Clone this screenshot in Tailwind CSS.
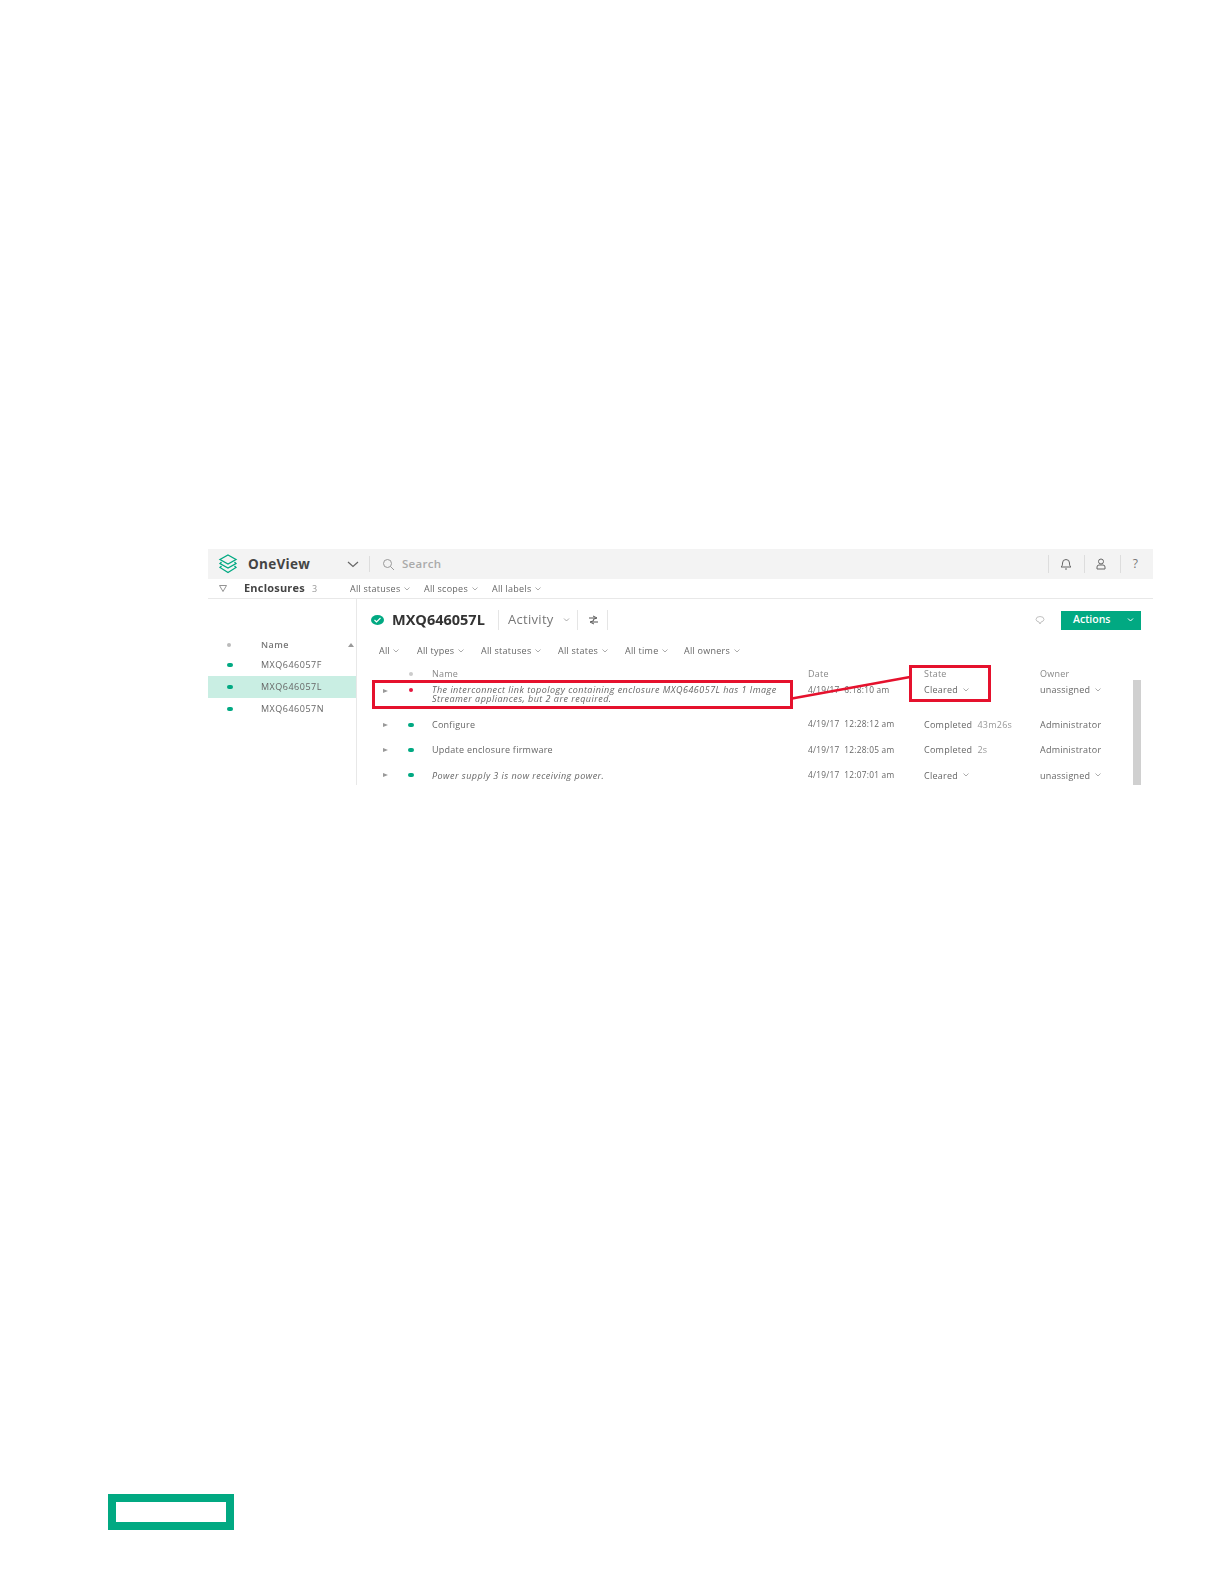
<!DOCTYPE html>
<html lang="en">
<head>
    <meta charset="UTF-8">
    <title>OneView Enclosures</title>
    <script src="https://cdn.jsdelivr.net/npm/@tailwindcss/browser@4"></script>
</head>
<body class="bg-white min-h-screen font-['Open_Sans',sans-serif]">
    <div class="relative w-[1224px] h-[1584px] pt-[549px] pl-[208px]">

        <!-- Screenshot of the app -->
        <div class="w-[945px] h-[236px] text-[#666] blur-[0.4px]">
            <!-- Top bar -->
            <div class="h-[30px] bg-[#f3f3f3] flex items-center">
                <svg class="ml-[10px] w-[20px] h-[20px]" viewBox="0 0 20 20" fill="none" stroke="#01a982" stroke-width="1.3">
                    <path d="M10 1 L18 5.5 L10 10 L2 5.5 Z"/>
                    <path d="M3.5 8 L2 9.5 L10 14 L18 9.5 L16.5 8"/>
                    <path d="M3.5 12 L2 13.5 L10 18.5 L18 13.5 L16.5 12"/>
                </svg>
                <span class="ml-[10px] w-[99px] text-[13.5px] font-bold text-[#444] tracking-[0.3px]">OneView</span>
                <svg class="w-[12px] h-[7px]" viewBox="0 0 12 7" fill="none" stroke="#666" stroke-width="1.2"><path d="M1 1 L6 5.5 L11 1"/></svg>
                <div class="ml-[10px] w-px h-[16px] bg-[#ddd]"></div>
                <svg class="ml-[12px] w-[13px] h-[13px]" viewBox="0 0 13 13" fill="none" stroke="#999" stroke-width="1"><circle cx="5.5" cy="5.5" r="4"/><path d="M8.5 8.5 L12 12"/></svg>
                <span class="ml-[7px] text-[11.5px] font-semibold text-[#aaa] tracking-[0.3px]">Search</span>
                <div class="ml-auto w-px h-[18px] bg-[#ddd]"></div>
                <svg class="ml-[11px] w-[12px] h-[12px]" viewBox="0 0 12 12" fill="none" stroke="#666" stroke-width="1"><path d="M1 9 C2.5 8 2.5 6.5 2.5 5 A3.5 3.5 0 0 1 9.5 5 C9.5 6.5 9.5 8 11 9 Z"/><path d="M5 11 H7"/></svg>
                <div class="ml-[12px] w-px h-[18px] bg-[#ddd]"></div>
                <svg class="ml-[10px] w-[12px] h-[12px]" viewBox="0 0 12 12" fill="none" stroke="#666" stroke-width="1"><circle cx="6" cy="3.5" r="2.5"/><path d="M2 11 V9 A2 2 0 0 1 4 7 H8 A2 2 0 0 1 10 9 V11 Z"/></svg>
                <div class="ml-[13px] w-px h-[18px] bg-[#ddd]"></div>
                <span class="ml-[12px] text-[12px] text-[#777]">?</span>
                <div class="w-[15px]"></div>
            </div>

            <!-- Filter bar -->
            <div class="h-[20px] border-b border-[#e8e8e8] flex items-center text-[9px] tracking-[0.25px] text-[#666]">
                <svg class="ml-[11px] w-[8px] h-[7px]" viewBox="0 0 8 7" fill="none" stroke="#888" stroke-width="0.9"><path d="M0.5 0.5 H7.5 L4 6.5 Z"/></svg>
                <span class="ml-[17px] text-[11px] font-bold text-[#444] tracking-[0.2px] w-[68px]">Enclosures</span>
                <span class="text-[#999] w-[38px]">3</span>
                <span class="w-[74px] flex items-center gap-[4px]">All statuses <svg class="w-[6px] h-[4px]" viewBox="0 0 6 4" fill="none" stroke="#888" stroke-width="0.7"><path d="M0.5 0.5 L3 3 L5.5 0.5"/></svg></span>
                <span class="w-[68px] flex items-center gap-[4px]">All scopes <svg class="w-[6px] h-[4px]" viewBox="0 0 6 4" fill="none" stroke="#888" stroke-width="0.7"><path d="M0.5 0.5 L3 3 L5.5 0.5"/></svg></span>
                <span class="flex items-center gap-[4px]">All labels <svg class="w-[6px] h-[4px]" viewBox="0 0 6 4" fill="none" stroke="#888" stroke-width="0.7"><path d="M0.5 0.5 L3 3 L5.5 0.5"/></svg></span>
            </div>

            <div class="flex h-[186px]">
                <!-- Left list -->
                <div class="w-[149px] border-r border-[#e8e8e8] pt-[36px] text-[9px] tracking-[0.5px]">
                    <div class="h-[19px] flex items-center text-[#777] font-semibold">
                        <span class="ml-[19px] w-[4px] h-[4px] rounded-full bg-[#bbb]"></span>
                        <span class="ml-[30px] w-[87px]">Name</span>
                        <span class="w-0 h-0 border-x-[3px] border-x-transparent border-b-[4px] border-b-[#999]"></span>
                    </div>
                    <div class="h-[22px] flex items-center">
                        <span class="ml-[19px] w-[6px] h-[4px] rounded-full bg-[#01a982]"></span>
                        <span class="ml-[28px]">MXQ646057F</span>
                    </div>
                    <div class="h-[22px] flex items-center bg-[#c9eee3]">
                        <span class="ml-[19px] w-[6px] h-[4px] rounded-full bg-[#01a982]"></span>
                        <span class="ml-[28px]">MXQ646057L</span>
                    </div>
                    <div class="h-[22px] flex items-center">
                        <span class="ml-[19px] w-[6px] h-[4px] rounded-full bg-[#01a982]"></span>
                        <span class="ml-[28px]">MXQ646057N</span>
                    </div>
                </div>

                <!-- Detail pane -->
                <div class="flex-1 relative">
                    <div class="h-[42px] flex items-center pl-[14px] pr-[12px]">
                        <svg class="w-[13px] h-[10px]" viewBox="0 0 13 10"><ellipse cx="6.5" cy="5" rx="6.5" ry="5" fill="#01a982"/><path d="M3.5 5 L5.5 7 L9.5 3" stroke="#fff" stroke-width="1.1" fill="none"/></svg>
                        <span class="ml-[8px] text-[14.5px] font-bold text-[#333] w-[106px]">MXQ646057L</span>
                        <div class="w-px h-[20px] bg-[#e5e5e5]"></div>
                        <span class="ml-[9px] text-[13px] text-[#777] tracking-[0.3px] w-[50px]">Activity</span>
                        <svg class="ml-[5px] w-[7px] h-[4px]" viewBox="0 0 6 4" fill="none" stroke="#888" stroke-width="0.7"><path d="M0.5 0.5 L3 3 L5.5 0.5"/></svg>
                        <div class="ml-[7px] w-px h-[20px] bg-[#e5e5e5]"></div>
                        <svg class="ml-[11px] w-[9px] h-[10px]" viewBox="0 0 9 10" fill="none" stroke="#555" stroke-width="1"><path d="M0 3 H6 M4 1 L8 3 L4 4.5 M9 7 H3 M5 5.5 L1 7 L5 9"/></svg>
                        <div class="ml-[9px] w-px h-[20px] bg-[#e5e5e5]"></div>
                        <svg class="ml-auto w-[10px] h-[9px]" viewBox="0 0 10 9" fill="none" stroke="#bbb" stroke-width="0.9"><path d="M1 3.5 A4 3 0 0 1 9 3.5 A4 3 0 0 1 6 6 L5 8 L4 6 A4 3 0 0 1 1 3.5 Z"/></svg>
                        <div class="ml-[16px] w-[80px] h-[19px] bg-[#01a982] text-white text-[10.5px] font-semibold flex items-center pl-[12px]">
                            Actions
                            <svg class="ml-auto mr-[7px] w-[7px] h-[4px]" viewBox="0 0 6 4" fill="none" stroke="#fff" stroke-width="1"><path d="M0.5 0.5 L3 3 L5.5 0.5"/></svg>
                        </div>
                    </div>

                    <div class="mt-[1px] h-[18px] flex items-center pl-[22px] text-[9px] tracking-[0.25px] text-[#666]">
                        <span class="w-[38px] flex items-center gap-[3px]">All <svg class="w-[6px] h-[4px]" viewBox="0 0 6 4" fill="none" stroke="#888" stroke-width="0.7"><path d="M0.5 0.5 L3 3 L5.5 0.5"/></svg></span>
                        <span class="w-[64px] flex items-center gap-[4px]">All types <svg class="w-[6px] h-[4px]" viewBox="0 0 6 4" fill="none" stroke="#888" stroke-width="0.7"><path d="M0.5 0.5 L3 3 L5.5 0.5"/></svg></span>
                        <span class="w-[77px] flex items-center gap-[4px]">All statuses <svg class="w-[6px] h-[4px]" viewBox="0 0 6 4" fill="none" stroke="#888" stroke-width="0.7"><path d="M0.5 0.5 L3 3 L5.5 0.5"/></svg></span>
                        <span class="w-[67px] flex items-center gap-[4px]">All states <svg class="w-[6px] h-[4px]" viewBox="0 0 6 4" fill="none" stroke="#888" stroke-width="0.7"><path d="M0.5 0.5 L3 3 L5.5 0.5"/></svg></span>
                        <span class="w-[59px] flex items-center gap-[4px]">All time <svg class="w-[6px] h-[4px]" viewBox="0 0 6 4" fill="none" stroke="#888" stroke-width="0.7"><path d="M0.5 0.5 L3 3 L5.5 0.5"/></svg></span>
                        <span class="flex items-center gap-[4px]">All owners <svg class="w-[6px] h-[4px]" viewBox="0 0 6 4" fill="none" stroke="#888" stroke-width="0.7"><path d="M0.5 0.5 L3 3 L5.5 0.5"/></svg></span>
                    </div>

                    <!-- Activity table -->
                    <div class="mt-[5px] text-[9px] tracking-[0.25px] text-[#666] grid grid-cols-[25px_24px_376px_116px_116px_1fr] pl-[26px] items-center">
                        <div class="h-[18px]"></div>
                        <div class="h-[18px] flex items-center"><span class="ml-[1px] w-[4px] h-[4px] rounded-full bg-[#ccc]"></span></div>
                        <div class="text-[#888]">Name</div>
                        <div class="text-[#888]">Date</div>
                        <div class="text-[#888]">State</div>
                        <div class="text-[#888]">Owner</div>

                        <div class="h-[29px] self-start pt-[6px]"><span class="block w-0 h-0 border-y-[2.5px] border-y-transparent border-l-[5px] border-l-[#999]"></span></div>
                        <div class="h-[29px] self-start pt-[5px]"><span class="block ml-[1px] w-[4px] h-[4px] rounded-full bg-[#e5173f]"></span></div>
                        <div class="h-[29px] self-start pt-[2px] italic tracking-[0.47px] leading-[9px] whitespace-nowrap">The interconnect link topology containing enclosure MXQ646057L has 1 Image<br>Streamer appliances, but 2 are required.</div>
                        <div class="h-[29px] self-start pt-[2px] text-[8.3px] leading-[9px]">4/19/17&nbsp; 6:18:10 am</div>
                        <div class="h-[29px] self-start pt-[2px] leading-[9px] flex items-start gap-[5px]">Cleared <svg class="mt-[3px] w-[6px] h-[4px]" viewBox="0 0 6 4" fill="none" stroke="#888" stroke-width="0.7"><path d="M0.5 0.5 L3 3 L5.5 0.5"/></svg></div>
                        <div class="h-[29px] self-start pt-[2px] leading-[9px] flex items-start gap-[5px]">unassigned <svg class="mt-[3px] w-[6px] h-[4px]" viewBox="0 0 6 4" fill="none" stroke="#888" stroke-width="0.7"><path d="M0.5 0.5 L3 3 L5.5 0.5"/></svg></div>

                        <div class="h-[25.4px] flex items-center"><span class="block w-0 h-0 border-y-[2.5px] border-y-transparent border-l-[5px] border-l-[#999]"></span></div>
                        <div class="h-[25.4px] flex items-center"><span class="block w-[6px] h-[4px] rounded-full bg-[#01a982]"></span></div>
                        <div>Configure</div>
                        <div class="text-[8.3px]">4/19/17&nbsp; 12:28:12 am</div>
                        <div>Completed&nbsp; <span class="text-[#999]">43m26s</span></div>
                        <div>Administrator</div>

                        <div class="h-[25.4px] flex items-center"><span class="block w-0 h-0 border-y-[2.5px] border-y-transparent border-l-[5px] border-l-[#999]"></span></div>
                        <div class="h-[25.4px] flex items-center"><span class="block w-[6px] h-[4px] rounded-full bg-[#01a982]"></span></div>
                        <div>Update enclosure firmware</div>
                        <div class="text-[8.3px]">4/19/17&nbsp; 12:28:05 am</div>
                        <div>Completed&nbsp; <span class="text-[#999]">2s</span></div>
                        <div>Administrator</div>

                        <div class="h-[25.4px] flex items-center"><span class="block w-0 h-0 border-y-[2.5px] border-y-transparent border-l-[5px] border-l-[#999]"></span></div>
                        <div class="h-[25.4px] flex items-center"><span class="block w-[6px] h-[4px] rounded-full bg-[#01a982]"></span></div>
                        <div class="italic tracking-[0.47px]">Power supply 3 is now receiving power.</div>
                        <div class="text-[8.3px]">4/19/17&nbsp; 12:07:01 am</div>
                        <div class="flex items-center gap-[5px]">Cleared <svg class="w-[6px] h-[4px]" viewBox="0 0 6 4" fill="none" stroke="#888" stroke-width="0.7"><path d="M0.5 0.5 L3 3 L5.5 0.5"/></svg></div>
                        <div class="flex items-center gap-[5px]">unassigned <svg class="w-[6px] h-[4px]" viewBox="0 0 6 4" fill="none" stroke="#888" stroke-width="0.7"><path d="M0.5 0.5 L3 3 L5.5 0.5"/></svg></div>
                    </div>

                    <!-- Scrollbar -->
                    <div class="absolute left-[776px] top-[81px] w-[8px] h-[105px] bg-[#d0d0d0]"></div>
                </div>
            </div>
        </div>

        <!-- Red callouts over the screenshot -->
        <div class="absolute left-[372px] top-[680px] w-[421px] h-[29px] border-[3px] border-[#e5112d]"></div>
        <div class="absolute left-[909px] top-[665px] w-[82px] h-[37px] border-[3px] border-[#e5112d]"></div>
        <svg class="absolute left-[790px] top-[674px] w-[122px] h-[28px]" viewBox="0 0 122 28"><path d="M2 24.5 L120 3" stroke="#e5112d" stroke-width="2.5"/></svg>

        <!-- HPE logo -->
        <div class="absolute left-[108px] top-[1494px] w-[126px] h-[36px] border-[8px] border-[#01a982]"></div>
    </div>
</body>
</html>
